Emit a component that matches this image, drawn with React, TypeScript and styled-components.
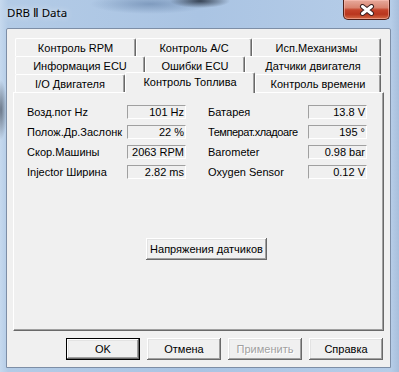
import React from "react";
import styled, { createGlobalStyle } from "styled-components";

const Global = createGlobalStyle`
  html, body {
    margin: 0;
    padding: 0;
    background: #b9cde4;
  }
  * { box-sizing: border-box; }
`;

const Window = styled.div`
  width: 399px;
  height: 372px;
  display: flex;
  flex-direction: column;
  padding: 0 8px 4px 6px;
  background:
    radial-gradient(ellipse 30px 7px at 200px 1px, rgba(35, 45, 60, 0.85), transparent),
    radial-gradient(ellipse 60px 10px at 150px 4px, rgba(90, 120, 160, 0.55), transparent),
    radial-gradient(ellipse 6px 30px at 1px 110px, rgba(70, 80, 95, 0.7), transparent),
    linear-gradient(to right, #c6d9ee 0%, #b3cbe6 2%, #aac4e3 50%, #b6cde8 98%, #a8bfdc 100%);
  font-family: "Liberation Sans", Arial, sans-serif;
  font-size: 11px;
  color: #000;
`;

const TitleBar = styled.div`
  height: 28px;
  display: flex;
  justify-content: space-between;
  align-items: flex-start;
  padding-left: 1px;
`;

const Title = styled.div`
  font-family: "Noto Sans", "DejaVu Sans", sans-serif;
  font-size: 11.5px;
  color: #000;
  margin-top: 5px;
  text-shadow: 0 0 6px rgba(255, 255, 255, 0.9);
`;

const CloseButton = styled.div`
  width: 47px;
  height: 20px;
  margin-right: 1px;
  border: 1px solid #4e1f18;
  border-top: none;
  border-radius: 0 0 5px 5px;
  background: linear-gradient(
    to bottom,
    #e7aa9c 0%,
    #d98470 40%,
    #c4432a 52%,
    #b9361e 75%,
    #d46a45 100%
  );
  box-shadow: inset 0 0 0 1px rgba(255, 200, 190, 0.5);
  display: flex;
  align-items: center;
  justify-content: center;
`;

const Client = styled.div`
  flex: 1;
  background: #f0f0f0;
  border: 1px solid #7d8ea6;
  border-radius: 2px 2px 0 0;
  padding: 9px 6px 0 6px;
  display: flex;
  flex-direction: column;
`;

const Tabs = styled.div`
  display: flex;
  flex-direction: column;
`;

const TabRow = styled.div`
  display: flex;
  height: 18px;
  padding-left: 2px;
`;

const Tab = styled.div<{ $w: number; $active?: boolean }>`
  width: ${(p) => p.$w}px;
  height: ${(p) => (p.$active ? 21 : 18)}px;
  position: relative;
  top: ${(p) => (p.$active ? -2 : 0)}px;
  z-index: ${(p) => (p.$active ? 2 : 0)};
  display: flex;
  align-items: center;
  justify-content: center;
  padding-bottom: ${(p) => (p.$active ? 3 : 0)}px;
  background: #f0f0f0;
  border-top: 1px solid #fff;
  border-left: 1px solid #fff;
  border-right: 1px solid #696969;
  border-radius: 2px 2px 0 0;
  box-shadow: inset -1px 0 0 #a0a0a0;
  white-space: nowrap;
`;

const Panel = styled.div`
  height: 239px;
  border-top: 1px solid #fff;
  border-left: 1px solid #fff;
  border-right: 1px solid #696969;
  border-bottom: 1px solid #696969;
  box-shadow: inset -1px -1px 0 #a0a0a0;
  padding: 12px 0 0 13px;
  display: flex;
  flex-direction: column;
`;

const Grid = styled.div`
  display: grid;
  grid-template-columns: 100px 59px 122px 59px;
  row-gap: 6px;
`;

const Label = styled.div<{ $right?: boolean; $tight?: boolean }>`
  height: 14px;
  line-height: 14px;
  margin-left: ${(p) => (p.$right ? 22 : 0)}px;
  letter-spacing: ${(p) => (p.$tight ? "-0.45px" : "normal")};
  white-space: nowrap;
  overflow: hidden;
`;

const Value = styled.div`
  height: 14px;
  line-height: 13px;
  border-top: 1px solid #a0a0a0;
  border-left: 1px solid #a0a0a0;
  border-bottom: 1px solid #fff;
  border-right: 1px solid #fff;
  text-align: right;
  padding-right: 1px;
  white-space: nowrap;
`;

const Button = styled.button<{ $default?: boolean; $w: number }>`
  width: ${(p) => p.$w}px;
  height: 22px;
  padding: 0;
  font-family: "Liberation Sans", Arial, sans-serif;
  font-size: 11px;
  color: ${(p) => (p.disabled ? "#a0a0a0" : "#000")};
  text-shadow: ${(p) => (p.disabled ? "1px 1px 0 #fff" : "none")};
  background: #f0f0f0;
  border: ${(p) => (p.$default ? "1px solid #000" : "none")};
  border-radius: 0;
  box-shadow: inset -1px -1px 0 #696969, inset 1px 1px 0 #fff,
    inset -2px -2px 0 #a0a0a0, inset 2px 2px 0 #e3e3e3;
  cursor: default;
`;

const SensorButton = styled(Button)`
  margin-top: 59px;
  margin-left: 119px;
`;

const ButtonBar = styled.div`
  display: flex;
  justify-content: flex-end;
  gap: 7px;
  padding: 7px 1px 0 0;
`;

const tabRows: { label: string; w: number; active?: boolean }[][] = [
  [
    { label: "Контроль RPM", w: 121 },
    { label: "Контроль A/C", w: 116 },
    { label: "Исп.Механизмы", w: 129 },
  ],
  [
    { label: "Информация ECU", w: 130 },
    { label: "Ошибки ECU", w: 100 },
    { label: "Датчики двигателя", w: 136 },
  ],
  [
    { label: "I/O Двигателя", w: 110 },
    { label: "Контроль Топлива", w: 130, active: true },
    { label: "Контроль времени", w: 126 },
  ],
];

const rows: [string, string, string, string][] = [
  ["Возд.пот Hz", "101 Hz", "Батарея", "13.8 V"],
  ["Полож.Др.Заслонк", "22 %", "Температ.хладоаге", "195 °"],
  ["Скор.Машины", "2063 RPM", "Barometer", "0.98 bar"],
  ["Injector Ширина", "2.82 ms", "Oxygen Sensor", "0.12 V"],
];

export default function App() {
  return (
    <>
      <Global />
      <Window>
        <TitleBar>
          <Title>DRB Ⅱ Data</Title>
          <CloseButton>
            <svg width="16" height="12" viewBox="0 0 16 12">
              <path
                d="M3.5 2.5 L12.5 9.5 M12.5 2.5 L3.5 9.5"
                stroke="#3a2020"
                strokeWidth="5"
                strokeLinecap="round"
              />
              <path
                d="M3.5 2.5 L12.5 9.5 M12.5 2.5 L3.5 9.5"
                stroke="#fff"
                strokeWidth="3"
                strokeLinecap="round"
              />
            </svg>
          </CloseButton>
        </TitleBar>
        <Client>
          <Tabs>
            {tabRows.map((row, i) => (
              <TabRow key={i}>
                {row.map((t) => (
                  <Tab key={t.label} $w={t.w} $active={t.active}>
                    {t.label}
                  </Tab>
                ))}
              </TabRow>
            ))}
            <Panel>
              <Grid>
                {rows.map(([l1, v1, l2, v2]) => (
                  <React.Fragment key={l1}>
                    <Label>{l1}</Label>
                    <Value>{v1}</Value>
                    <Label $right $tight={l2.length > 15}>
                      {l2}
                    </Label>
                    <Value>{v2}</Value>
                  </React.Fragment>
                ))}
              </Grid>
              <div>
                <SensorButton $w={121}>Напряжения датчиков</SensorButton>
              </div>
            </Panel>
          </Tabs>
          <ButtonBar>
            <Button $w={74} $default>OK</Button>
            <Button $w={74}>Отмена</Button>
            <Button $w={74} disabled>
              Применить
            </Button>
            <Button $w={74}>Справка</Button>
          </ButtonBar>
        </Client>
      </Window>
    </>
  );
}
